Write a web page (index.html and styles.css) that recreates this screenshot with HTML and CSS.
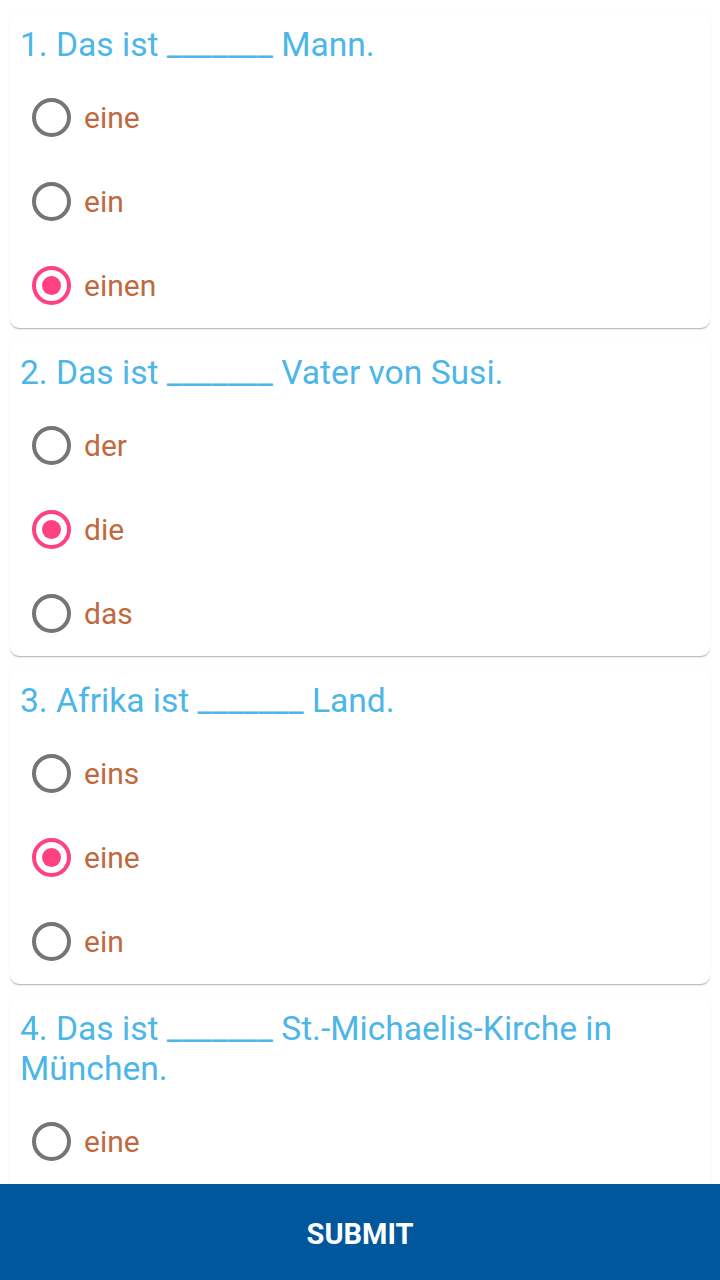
FILE: index.html
```html
<!DOCTYPE html>
<html lang="de">
<head>
<meta charset="utf-8">
<link rel="stylesheet" href="styles.css">
</head>
<body>
<div class="app">
  <div class="list">
    <div class="card">
      <div class="question">1. Das ist _______ Mann.</div>
      <div class="option"><span class="radio"></span><span class="label">eine</span></div>
      <div class="option"><span class="radio"></span><span class="label">ein</span></div>
      <div class="option"><span class="radio checked"></span><span class="label">einen</span></div>
    </div>
    <div class="card">
      <div class="question">2. Das ist _______ Vater von Susi.</div>
      <div class="option"><span class="radio"></span><span class="label">der</span></div>
      <div class="option"><span class="radio checked"></span><span class="label">die</span></div>
      <div class="option"><span class="radio"></span><span class="label">das</span></div>
    </div>
    <div class="card">
      <div class="question">3. Afrika ist _______ Land.</div>
      <div class="option"><span class="radio"></span><span class="label">eins</span></div>
      <div class="option"><span class="radio checked"></span><span class="label">eine</span></div>
      <div class="option"><span class="radio"></span><span class="label">ein</span></div>
    </div>
    <div class="card">
      <div class="question">4. Das ist _______ St.-Michaelis-Kirche in München.</div>
      <div class="option"><span class="radio"></span><span class="label">eine</span></div>
    </div>
  </div>
  <div class="submit">SUBMIT</div>
</div>
</body>
</html>
```

FILE: styles.css
```css
html, body {
  margin: 0;
  padding: 0;
  background: #ffffff;
  font-family: Roboto, "Noto Sans", sans-serif;
}
.app {
  height: 1280px;
  display: flex;
  flex-direction: column;
  overflow: hidden;
}
.list {
  flex: 1;
  overflow: hidden;
  padding: 10px 10px 0 10px;
  display: flex;
  flex-direction: column;
  gap: 10px;
}
.card {
  flex-shrink: 0;
  background: #fff;
  border-radius: 9px;
  box-shadow: 0 1px 1px rgba(0,0,0,0.14), 0 2px 2px -1px rgba(0,0,0,0.2), 0 0 1px rgba(0,0,0,0.08);
  padding: 15px 10px 0 10px;
  height: 303px;
}
.card:last-child { height: auto; padding-bottom: 40px; }
.question {
  color: #4db6e8;
  font-size: 33.6px;
  line-height: 40px;
  padding-bottom: 10px;
}
.option {
  height: 84px;
  display: flex;
  align-items: center;
  padding-left: 12px;
}
.radio {
  width: 31px;
  height: 31px;
  border: 4px solid #757575;
  border-radius: 50%;
  display: flex;
  align-items: center;
  justify-content: center;
  flex-shrink: 0;
}
.radio.checked {
  border-color: #ff4081;
}
.radio.checked::after {
  content: "";
  width: 19px;
  height: 19px;
  border-radius: 50%;
  background: #ff4081;
}
.label {
  color: #bf6a3e;
  font-size: 30px;
  margin-left: 13px;
}
.submit {
  flex-shrink: 0;
  height: 96px;
  background: #01579b;
  color: #fff;
  font-weight: bold;
  font-size: 29px;
  padding-top: 3px;
  box-sizing: border-box;
  display: flex;
  align-items: center;
  justify-content: center;
}
```
